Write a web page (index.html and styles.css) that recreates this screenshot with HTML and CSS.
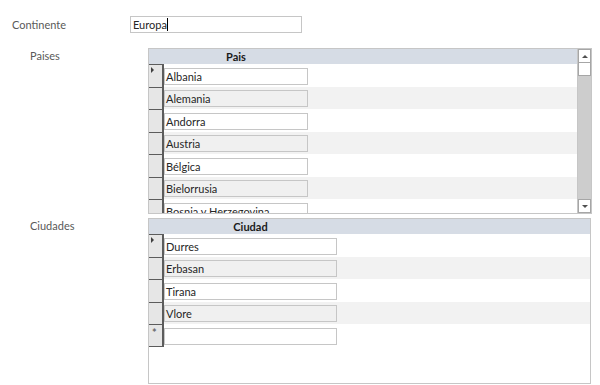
FILE: index.html
```html
<!DOCTYPE html>
<html lang="es">
<head>
  <meta charset="UTF-8" />
  <title>Continentes</title>
  <link rel="stylesheet" href="styles.css">
</head>
<body>

  <div class="form">
    <div class="row-top">
      <div class="lbl lbl-continente">Continente</div>
      <div class="field">Europa<span class="caret"></span></div>
    </div>

    <div class="row-sub row-paises">
      <div class="lbl lbl-sub">Paises</div>
      <div class="subform">
        <div class="grid">
          <div class="head"><div class="sp"></div><div class="col col-pais">Pais</div></div>
          <div class="rec"><div class="sel"><span class="cur"></span></div><div class="txt txt-pais">Albania</div></div>
          <div class="rec alt"><div class="sel"></div><div class="txt txt-pais">Alemania</div></div>
          <div class="rec"><div class="sel"></div><div class="txt txt-pais">Andorra</div></div>
          <div class="rec alt"><div class="sel"></div><div class="txt txt-pais">Austria</div></div>
          <div class="rec"><div class="sel"></div><div class="txt txt-pais">Bélgica</div></div>
          <div class="rec alt"><div class="sel"></div><div class="txt txt-pais">Bielorrusia</div></div>
          <div class="rec"><div class="sel"></div><div class="txt txt-pais">Bosnia y Herzegovina</div></div>
        </div>
        <div class="vscroll">
          <div class="sb-btn"><span class="arr-up"></span></div>
          <div class="sb-thumb"></div>
          <div class="sb-fill"></div>
          <div class="sb-btn"><span class="arr-down"></span></div>
        </div>
      </div>
    </div>

    <div class="row-sub row-ciudades">
      <div class="lbl lbl-sub">Ciudades</div>
      <div class="subform subform-ciudad">
        <div class="grid">
          <div class="head"><div class="sp"></div><div class="col col-ciudad">Ciudad</div></div>
          <div class="rec"><div class="sel"><span class="cur"></span></div><div class="txt txt-ciudad">Durres</div></div>
          <div class="rec alt"><div class="sel"></div><div class="txt txt-ciudad">Erbasan</div></div>
          <div class="rec"><div class="sel"></div><div class="txt txt-ciudad">Tirana</div></div>
          <div class="rec alt"><div class="sel"></div><div class="txt txt-ciudad">Vlore</div></div>
          <div class="rec rec-new"><div class="sel sel-last"><span class="ast">*</span></div><div class="txt txt-ciudad"></div></div>
        </div>
      </div>
    </div>
  </div>

</body>
</html>
```

FILE: styles.css
```css
* {
  box-sizing: border-box;
  margin: 0;
  padding: 0;
}

body {
  font-family: Lato, "Liberation Sans", sans-serif;
  font-size: 11px;
  color: #262626;
  background: #fff;
}

.form {
  display: flex;
  flex-direction: column;
  padding-top: 16px;
}

.lbl {
  color: #595959;
  line-height: 13px;
}

.row-top {
  display: flex;
  align-items: center;
  height: 17px;
}

.lbl-continente {
  width: 130px;
  padding-left: 12px;
}

.field {
  width: 172px;
  height: 17px;
  border: 1px solid #c6c6c6;
  padding-left: 2px;
  line-height: 15px;
  display: flex;
  align-items: center;
}

.caret {
  display: inline-block;
  width: 1px;
  height: 13px;
  background: #000;
}

.row-sub {
  display: flex;
  align-items: flex-start;
}

.row-paises {
  margin-top: 15px;
}

.row-ciudades {
  margin-top: 4px;
}

.lbl-sub {
  width: 148px;
  padding-left: 30px;
  padding-top: 1px;
}

.subform {
  width: 444px;
  height: 166px;
  border: 1px solid #c6c6c6;
  display: flex;
  overflow: hidden;
}

.subform-ciudad {
  width: 443px;
}

.grid {
  flex: 1;
  display: flex;
  flex-direction: column;
  overflow: hidden;
}

.head {
  flex: none;
  height: 15px;
  background: #d6dce5;
  display: flex;
  font-weight: bold;
  line-height: 15px;
  color: #1a1a1a;
}

.head .sp {
  width: 15px;
}

.col-pais {
  width: 144px;
  text-align: center;
}

.col-ciudad {
  width: 173px;
  text-align: center;
}

.rec {
  flex: none;
  height: 22.5px;
  display: flex;
  align-items: flex-start;
}

.rec.alt {
  background: #f2f2f2;
}

.sel {
  position: relative;
  width: 15px;
  height: 100%;
  background: #e6e6e6;
  border-top: 1px solid #5c5c5c;
  border-right: 2px solid #5c5c5c;
}

.sel-last {
  border-bottom: 1px solid #5c5c5c;
}

.cur {
  position: absolute;
  left: 2px;
  top: 2px;
  width: 0;
  height: 0;
  border-top: 3px solid transparent;
  border-bottom: 3px solid transparent;
  border-left: 3px solid #404040;
}

.ast {
  position: absolute;
  left: 3px;
  top: 2px;
  font-size: 11px;
  line-height: 11px;
  font-weight: bold;
  color: #6a6a6a;
}

.txt {
  margin-top: 3.5px;
  height: 17px;
  border: 1px solid #c6c6c6;
  background: #fff;
  padding-left: 1px;
  line-height: 15px;
  white-space: nowrap;
  overflow: hidden;
}

.alt .txt {
  background: #f0f0f0;
}

.txt-pais {
  width: 144px;
}

.txt-ciudad {
  width: 173px;
}

.vscroll {
  width: 14px;
  background: #cdcdcd;
  border-left: 1px solid #c6c6c6;
  display: flex;
  flex-direction: column;
}

.sb-btn {
  flex: none;
  height: 14px;
  background: #fff;
  border: 1px solid #a6a6a6;
  display: flex;
  align-items: center;
  justify-content: center;
}

.sb-thumb {
  flex: none;
  height: 13px;
  background: #fff;
  border: 1px solid #a6a6a6;
  border-top: none;
}

.sb-fill {
  flex: 1;
}

.arr-up,
.arr-down {
  width: 0;
  height: 0;
  border-left: 3px solid transparent;
  border-right: 3px solid transparent;
}

.arr-up {
  border-bottom: 3px solid #505050;
}

.arr-down {
  border-top: 3px solid #505050;
}
```
